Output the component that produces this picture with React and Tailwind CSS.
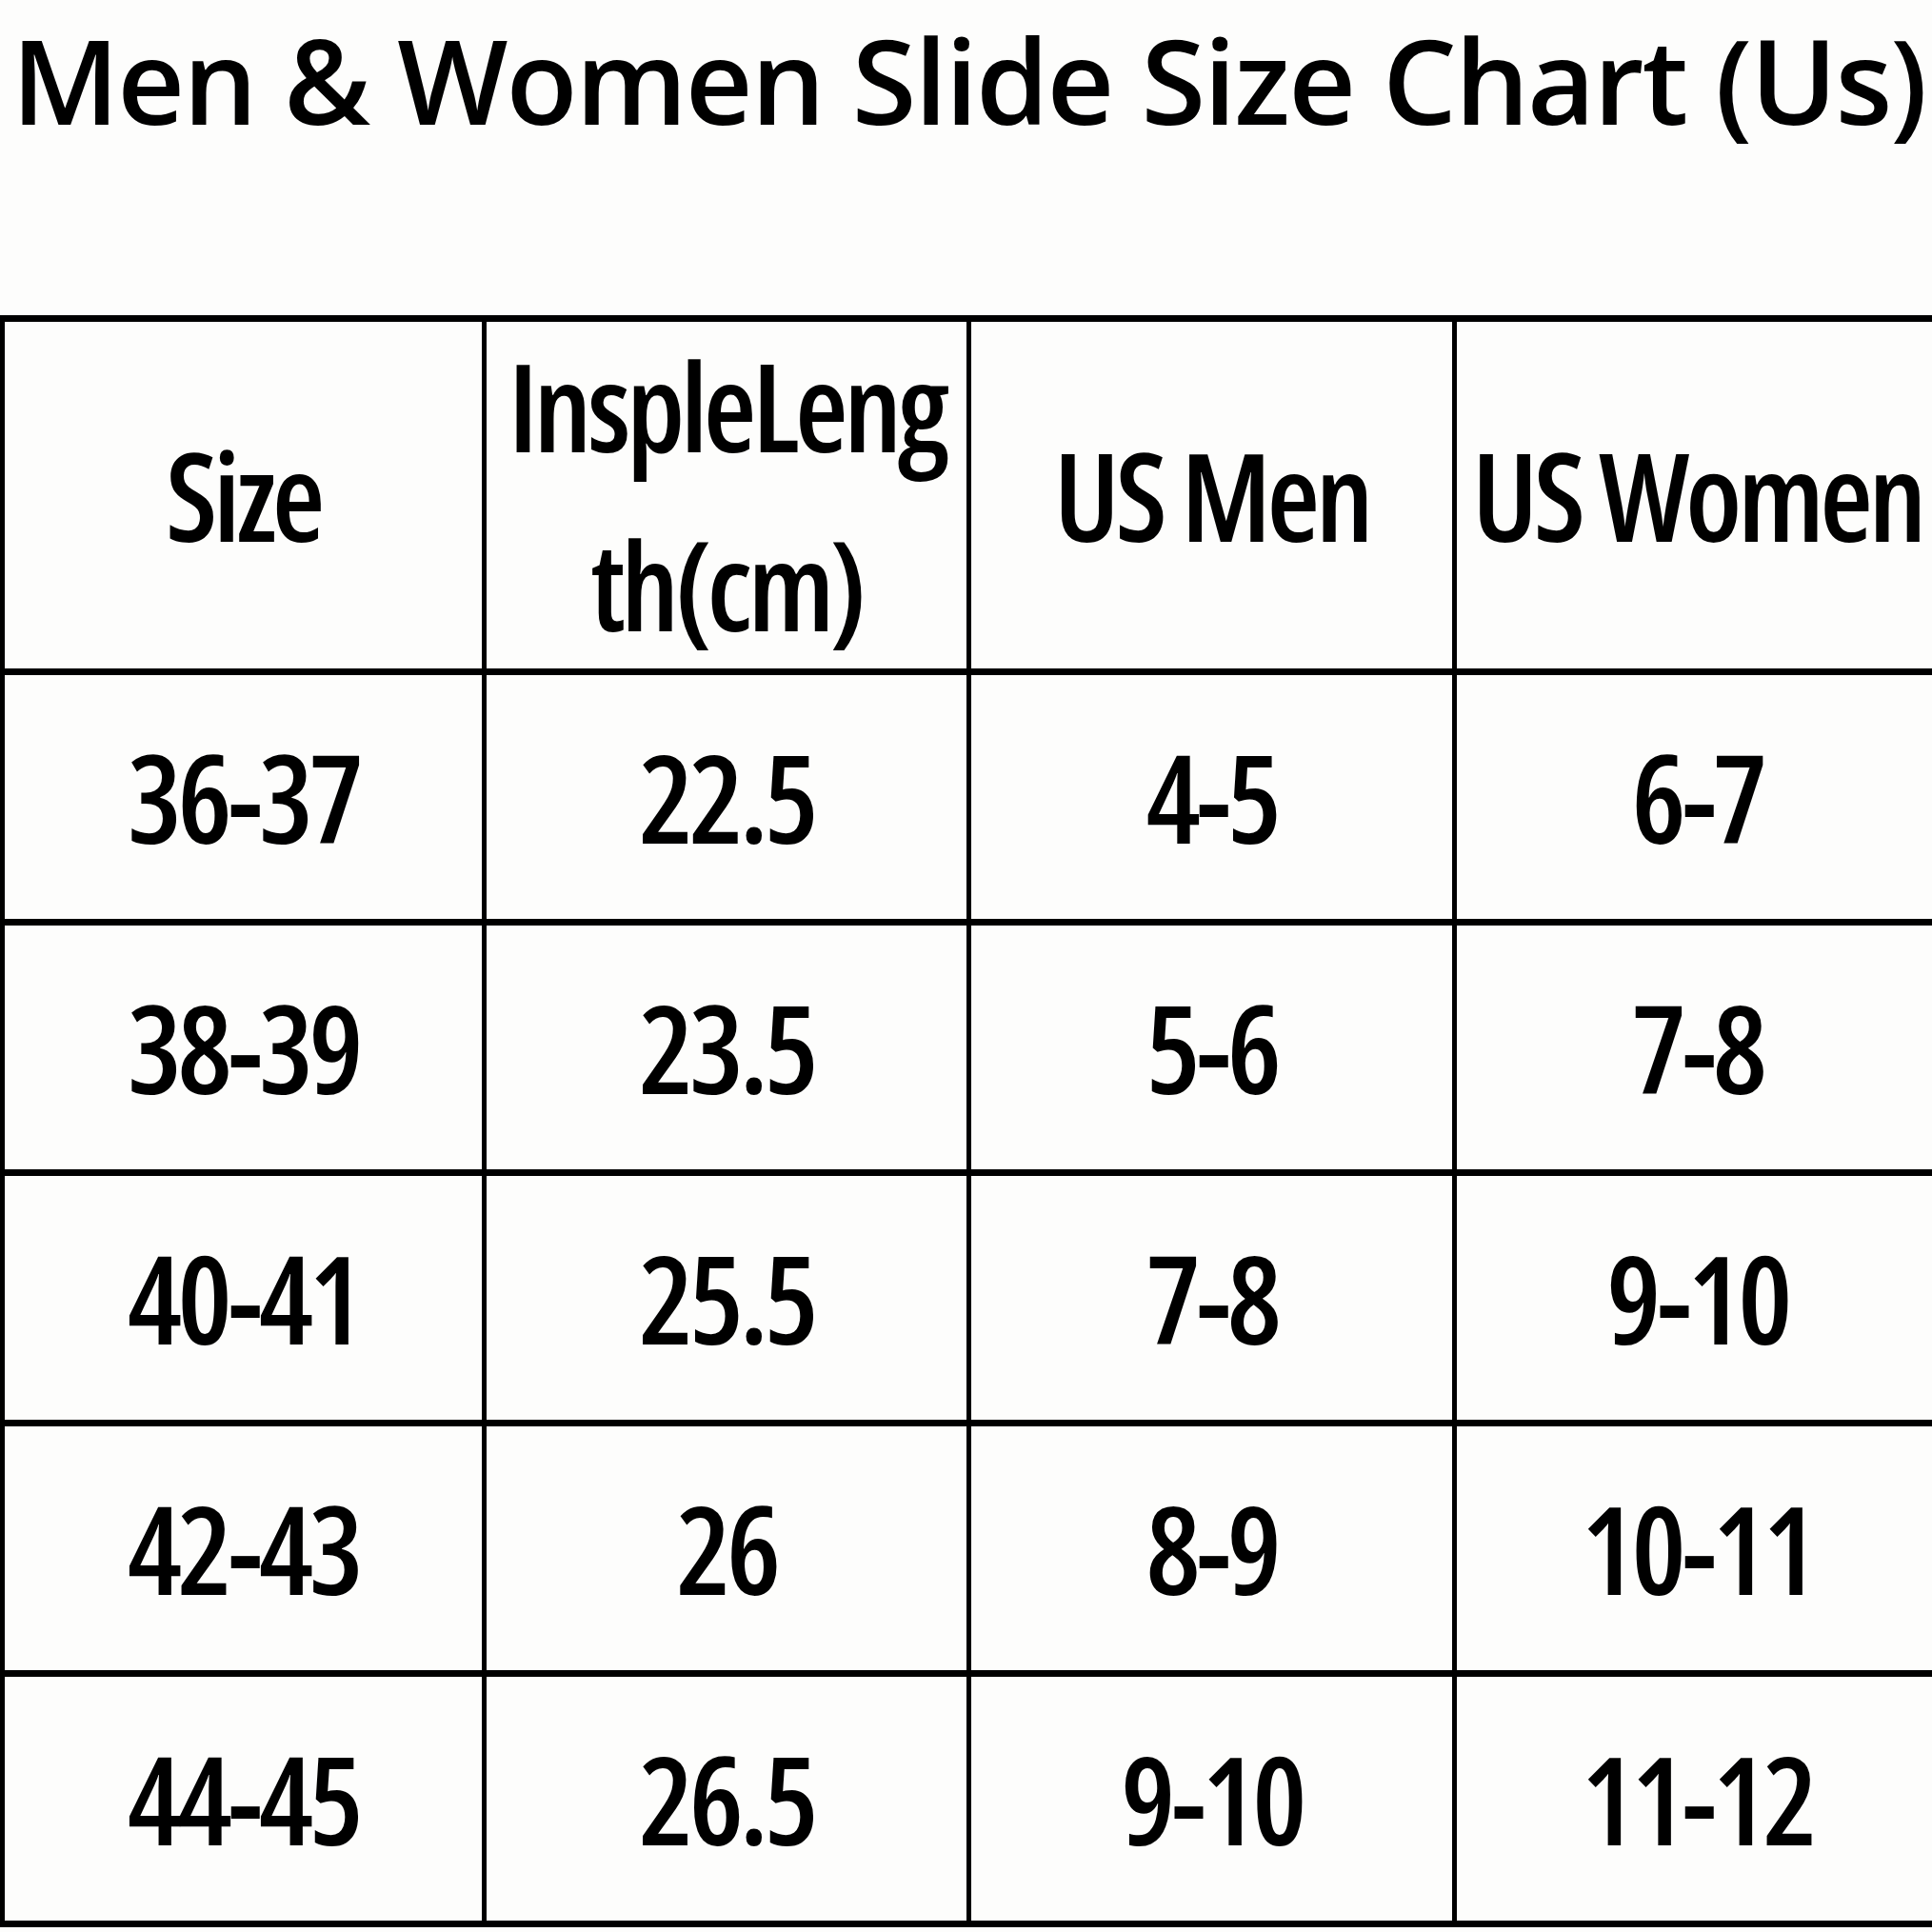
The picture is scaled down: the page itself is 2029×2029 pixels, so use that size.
import React from 'react'

const rows = [
  ['36-37', '22.5', '4-5', '6-7'],
  ['38-39', '23.5', '5-6', '7-8'],
  ['40-41', '25.5', '7-8', '9-10'],
  ['42-43', '26', '8-9', '10-11'],
  ['44-45', '26.5', '9-10', '11-12'],
]

const font = "font-['Open_Sans','DejaVu_Sans',sans-serif] font-semibold [font-stretch:75%] text-[128px] tracking-[-4.5px] text-black"
const cellText = font + ' leading-none'

const App = () => {
  return (
    <div className="w-[2029px] h-[2029px] overflow-hidden bg-[#fdfdfc]">
      <h1 className="pl-[12px] pt-[10px] h-[331px] font-['Open_Sans',sans-serif] font-semibold tracking-[-2px] text-[123px] leading-[1.2] text-black whitespace-nowrap">
        Men &amp; Women Slide Size Chart (Us)
      </h1>

      <div className="grid grid-cols-[511px_509px_510px_510px] border-t-[7px] border-black">
        <div className="h-[371px] border-l-[5px] border-r-[5px] border-b-[7px] border-black flex items-center justify-center">
          <span className={cellText}>Size</span>
        </div>
        <div className="h-[371px] border-r-[5px] border-b-[7px] border-black flex flex-col items-center justify-center">
          <span className={font + ' leading-[188px]'}>InspleLeng</span>
          <span className={font + ' leading-[188px]'}>th(cm)</span>
        </div>
        <div className="h-[371px] border-r-[5px] border-b-[7px] border-black flex items-center justify-center">
          <span className={cellText}>US Men</span>
        </div>
        <div className="h-[371px] border-r-[5px] border-b-[7px] border-black flex items-center justify-center">
          <span className={cellText + ' whitespace-nowrap'}>US Women</span>
        </div>

        {rows.map((row, i) =>
          row.map((val, j) => (
            <div
              key={i + '-' + j}
              className={
                'h-[263px] border-r-[5px] border-b-[7px] border-black flex items-center justify-center ' +
                (j === 0 ? 'border-l-[5px]' : '')
              }
            >
              <span className={cellText}>{val}</span>
            </div>
          ))
        )}
      </div>
    </div>
  )
}

export default App
